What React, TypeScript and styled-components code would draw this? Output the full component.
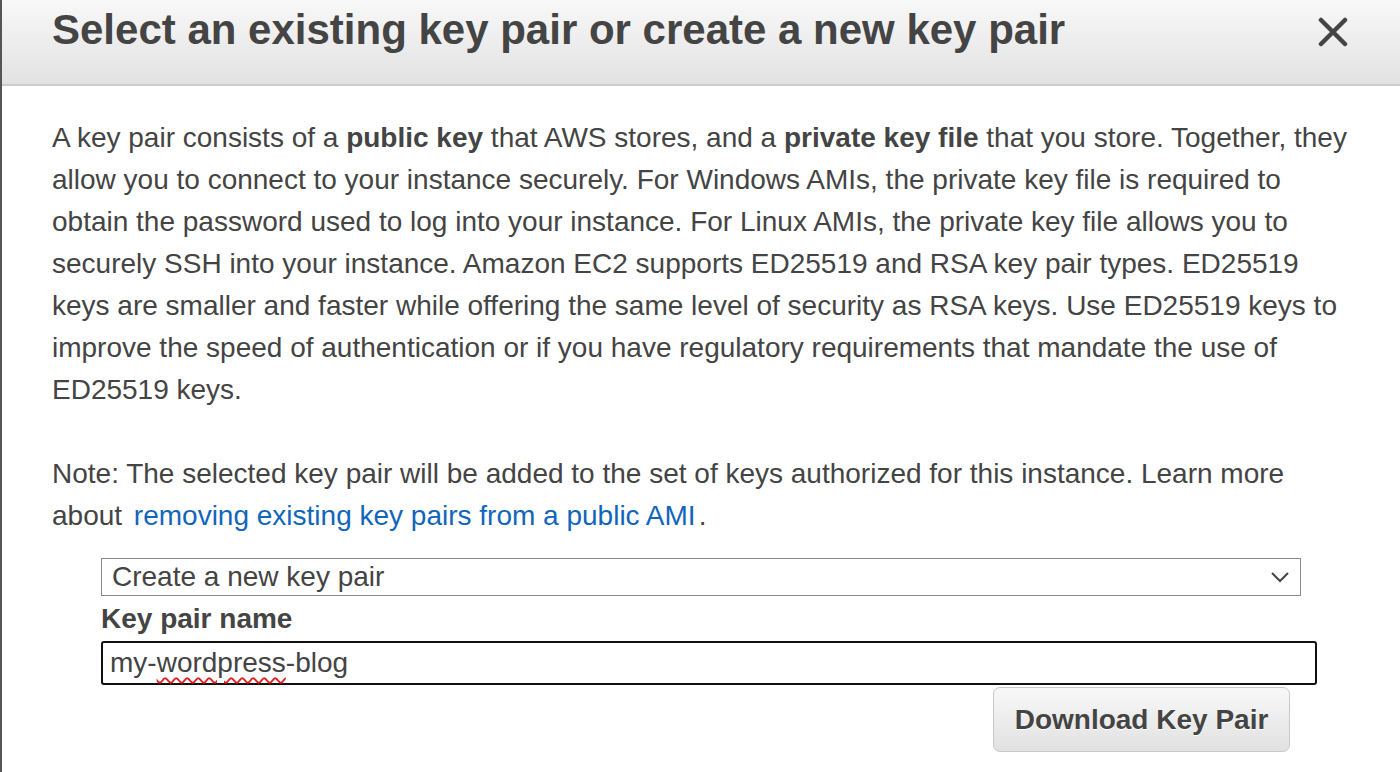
import React from "react";
import styled, { createGlobalStyle } from "styled-components";

const GlobalStyle = createGlobalStyle`
  html, body {
    margin: 0;
    padding: 0;
    background: #ffffff;
  }
  body {
    font-family: "Liberation Sans", Arial, sans-serif;
    color: #444444;
  }
`;

const Dialog = styled.div`
  width: 1400px;
  height: 772px;
  box-sizing: border-box;
  border-left: 2px solid #555555;
  background: #ffffff;
  overflow: hidden;
`;

const Header = styled.div`
  height: 86px;
  box-sizing: border-box;
  display: flex;
  align-items: flex-start;
  justify-content: space-between;
  padding: 5px 52px 0 50px;
  background: linear-gradient(to bottom, #f8f8f8 0%, #e2e2e2 100%);
  border-bottom: 2px solid #cccccc;
`;

const Title = styled.h1`
  margin: 0;
  font-size: 42px;
  line-height: 50px;
  font-weight: bold;
  color: #444444;
`;

const CloseButton = styled.button`
  border: none;
  background: transparent;
  padding: 0;
  margin-top: 12px;
  width: 30px;
  height: 30px;
  cursor: pointer;
  display: flex;
  align-items: center;
  justify-content: center;
`;

const Body = styled.div`
  padding: 31px 50px 0 50px;
`;

const Paragraph = styled.p`
  margin: 0 0 42px 0;
  font-size: 28px;
  line-height: 42px;
  color: #444444;
`;

const Link = styled.a`
  color: #1166bb;
  text-decoration: none;
  margin: 0 3px 0 4px;
`;

const Form = styled.div`
  margin: -21px 0 0 49px;
  width: 1216px;
  display: flex;
  flex-direction: column;
`;

const SelectBox = styled.div`
  width: 1200px;
  height: 38px;
  box-sizing: border-box;
  border: 1px solid #8a8a8a;
  display: flex;
  align-items: center;
  justify-content: space-between;
  padding: 0 10px 0 10px;
  font-size: 28px;
  color: #444444;
  background: #ffffff;
`;

const Label = styled.label`
  font-size: 28px;
  line-height: 45px;
  font-weight: bold;
  color: #444444;
`;

const InputBox = styled.div`
  height: 44px;
  box-sizing: border-box;
  border: 2px solid #111111;
  border-radius: 3px;
  display: flex;
  align-items: center;
  padding: 0 7px;
  font-size: 28px;
  color: #444444;
  white-space: pre;
`;

const Misspelled = styled.span`
  text-decoration: underline wavy #e02020;
  text-decoration-thickness: 1.5px;
  text-underline-offset: 5px;
`;

const Actions = styled.div`
  display: flex;
  justify-content: flex-end;
  padding-right: 27px;
  margin-top: 2px;
`;

const PrimaryButton = styled.button`
  width: 297px;
  height: 65px;
  border: 1px solid #c8c8c8;
  border-radius: 7px;
  background: linear-gradient(to bottom, #f8f8f8 0%, #e1e1e1 100%);
  font-family: "Liberation Sans", Arial, sans-serif;
  font-size: 28px;
  font-weight: bold;
  color: #444444;
  text-shadow: 0 1px 0 #ffffff;
  cursor: pointer;
`;

export default function App() {
  return (
    <>
      <GlobalStyle />
      <Dialog>
        <Header>
          <Title>Select an existing key pair or create a new key pair</Title>
          <CloseButton aria-label="Close">
            <svg width="30" height="30" viewBox="0 0 30 30">
              <path d="M3 3 L27 27 M27 3 L3 27" stroke="#444444" strokeWidth="4.5" strokeLinecap="round" />
            </svg>
          </CloseButton>
        </Header>
        <Body>
          <Paragraph>
            A key pair consists of a <b>public key</b> that AWS stores, and a <b>private key file</b> that you
            store. Together, they allow you to connect to your instance securely. For Windows AMIs, the private
            key file is required to obtain the password used to log into your instance. For Linux AMIs, the
            private key file allows you to securely SSH into your instance. Amazon EC2 supports ED25519 and RSA
            key pair types. ED25519 keys are smaller and faster while offering the same level of security as RSA
            keys. Use ED25519 keys to improve the speed of authentication or if you have regulatory requirements
            that mandate the use of ED25519 keys.
          </Paragraph>
          <Paragraph>
            Note: The selected key pair will be added to the set of keys authorized for this instance. Learn
            more about <Link href="#">removing existing key pairs from a public AMI</Link>.
          </Paragraph>
          <Form>
            <SelectBox>
              <span>Create a new key pair</span>
              <svg width="20" height="12" viewBox="0 0 20 12">
                <path d="M2 2 L10 10 L18 2" stroke="#444444" strokeWidth="2" fill="none" />
              </svg>
            </SelectBox>
            <Label>Key pair name</Label>
            <InputBox>
              my-<Misspelled>wordpress</Misspelled>-blog
            </InputBox>
            <Actions>
              <PrimaryButton>Download Key Pair</PrimaryButton>
            </Actions>
          </Form>
        </Body>
      </Dialog>
    </>
  );
}
